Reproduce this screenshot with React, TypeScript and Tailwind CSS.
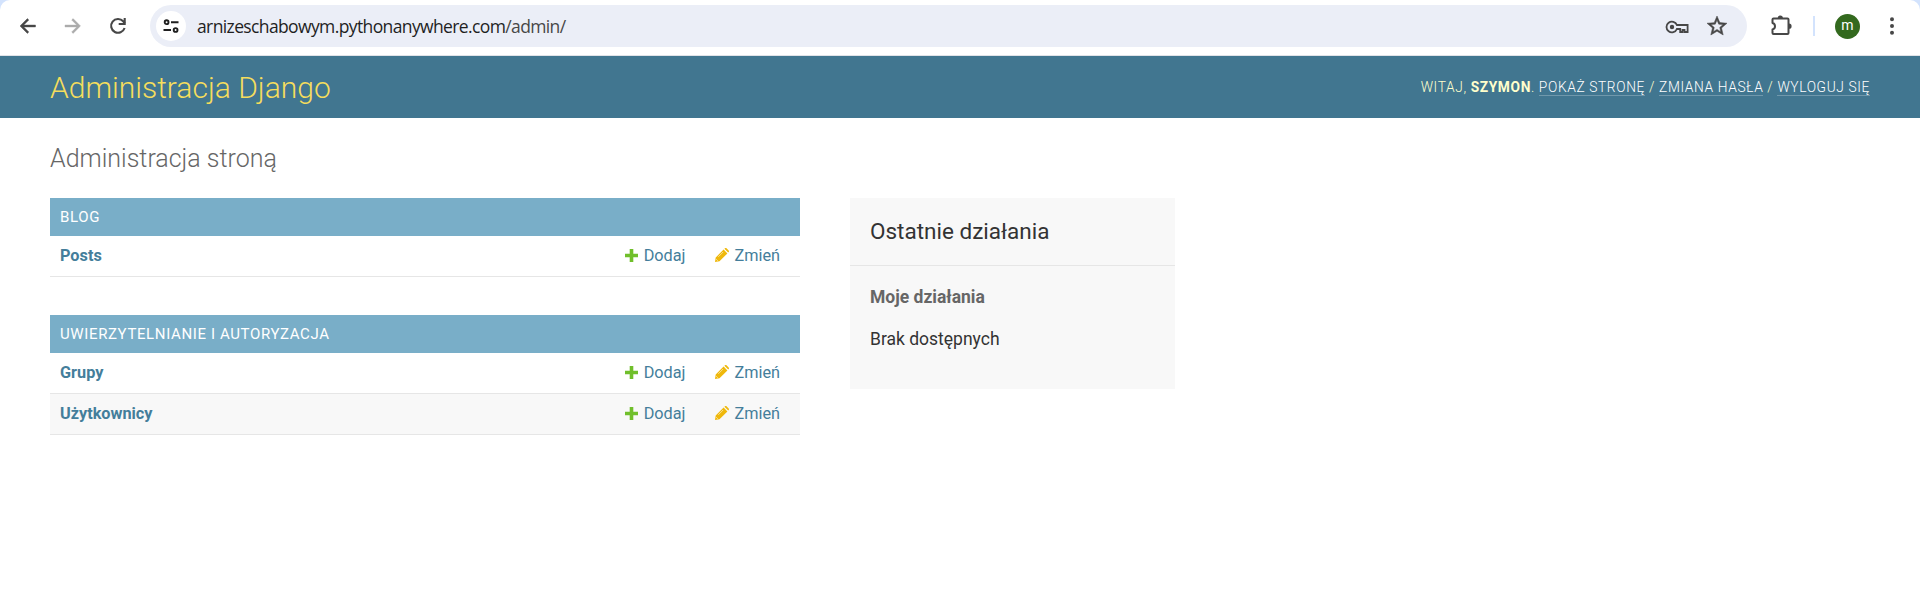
import type { ReactNode } from "react";

function Icon({ d, className }: { d: string; className: string }) {
  return (
    <svg viewBox="0 0 24 24" fill="currentColor" className={className}>
      <path d={d} />
    </svg>
  );
}

function BrowserBar() {
  return (
    <div className="bg-[#d3e3fd]">
      <div className="flex h-14 items-start rounded-t-[10px] border-b border-[#e1e3e8] bg-white">
        <div className="mt-[5px] flex h-[42px] items-center pl-4">
          <Icon className="size-6 stroke-current stroke-[0.4] text-[#474747]" d="M19.500 11H7.830l5-5L11.400 4.600 4 12l7.400 7.400 1.430-1.400-5-5H19.500z" />
          <Icon className="ml-[21px] size-6 stroke-current stroke-[0.4] text-[#ababab]" d="M12.100 4.600L10.670 6l5 5H4v2h11.670l-5 5 1.430 1.400L19.500 12z" />
          <svg viewBox="0 0 24 24" className="ml-[21px] size-6 text-[#474747]" fill="none" stroke="currentColor" strokeWidth="2.1">
            <path d="M18.600 14A6.900 6.900 0 1 1 17.200 7.300L18.800 9.200" />
            <path d="M18.700 4V10H12.700" />
          </svg>
        </div>
        <div className="mt-[5px] ml-[20px] flex h-[42px] w-[1597px] items-center rounded-full bg-[#ebeef7] pr-[18px] pl-1.5">
          <span className="flex size-[30px] items-center justify-center rounded-full bg-white text-[#1f1f1f]">
            <svg viewBox="0 0 16 16" className="size-4" fill="none" stroke="currentColor" strokeWidth="1.9">
              <circle cx="3.600" cy="4.200" r="1.900" />
              <path d="M8 4.200h7.500M.5 12h7.500" />
              <circle cx="12.600" cy="12" r="1.900" />
            </svg>
          </span>
          <span className="ml-[11px] font-['Open_Sans',sans-serif] text-[17.5px] tracking-[-0.62px] text-[#1f1f1f]">
            arnizeschabowym.pythonanywhere.com<span className="text-[#474747]">/admin/</span>
          </span>
          <svg viewBox="0 0 24 14" className="mt-px ml-auto h-[14px] w-6 text-[#474747]" fill="none" stroke="currentColor" strokeWidth="1.8">
            <path d="M11.900 5A5.400 5.400 0 1 0 11.900 9H15.200v3h2.300V10h2v2H22.600V5Z" />
            <circle cx="7" cy="7" r="1.300" fill="currentColor" />
          </svg>
          <Icon
            className="ml-4 size-6 stroke-current stroke-[0.5] text-[#474747]"
            d="M22 9.240l-7.190-.62L12 2 9.190 8.630 2 9.240l5.460 4.730L5.820 21 12 17.270 18.180 21l-1.630-7.030L22 9.240zM12 15.400l-3.760 2.270 1-4.280-3.320-2.880 4.380-.38L12 6.100l1.710 4.040 4.380.38-3.320 2.880 1 4.280L12 15.400z"
          />
        </div>
        <div className="mt-[5px] flex h-[42px] items-center">
          <svg viewBox="0 0 24 24" className="ml-[22px] size-6 text-[#474747]" fill="none" stroke="currentColor" strokeWidth="2">
            <path strokeLinejoin="round" d="M4.500 4.500H18.500Q19.500 4.500 19.500 5.500V19Q19.500 20 18.500 20H4.500Q3.500 20 3.500 19V15.500Q6 14.700 6 12.200T3.500 9V5.500Q3.500 4.500 4.500 4.500Z" />
            <path stroke="none" d="M8.700 4a2.600 2.600 0 0 1 5.200 0zM20 9.600a2.600 2.600 0 0 1 0 5.200z" fill="currentColor" />
          </svg>
          <span className="ml-5 h-5 w-0.5 bg-[#d3e3fd]" />
          <span className="ml-5 flex size-[25px] items-center justify-center rounded-full bg-[#33691e] pb-px font-['Roboto',sans-serif] text-[14px] text-white">m</span>
          <Icon
            className="ml-5 size-6 text-[#474747]"
            d="M12 7.200a2 2 0 1 0 0-4 2 2 0 0 0 0 4zm0 6.800a2 2 0 1 0 0-4 2 2 0 0 0 0 4zm0 6.800a2 2 0 1 0 0-4 2 2 0 0 0 0 4z"
          />
        </div>
      </div>
    </div>
  );
}

function UserLink({ children }: { children: ReactNode }) {
  return <a className="border-b border-white/25 text-white">{children}</a>;
}

function SiteHeader() {
  return (
    <header className="flex h-[62px] items-center justify-between bg-[#417690] px-[50px] pt-0.5 text-[#ffffcc]">
      <h1 className="text-[30px] leading-none font-light text-[#f5dd5d]">Administracja Django</h1>
      <div className="text-[13.75px] leading-none font-light tracking-[0.625px] uppercase">
        Witaj, <strong className="font-bold">Szymon</strong>. <UserLink>Pokaż stronę</UserLink> / <UserLink>Zmiana hasła</UserLink> /{" "}
        <UserLink>Wyloguj się</UserLink>
      </div>
    </header>
  );
}

function Row({ name }: { name: string }) {
  return (
    <div className="flex h-[41px] items-center border-b border-[#e6e6e6] pr-5 pl-2.5 text-[16.25px] text-[#447e9b] even:bg-[#f8f8f8]">
      <a className="mr-auto font-bold">{name}</a>
      <svg viewBox="0 0 13 13" className="mr-[6px] mb-0.5 size-[13px] fill-[#70bf2b]">
        <path d="M4.700 0h3.600v4.700H13v3.600H8.300V13H4.700V8.300H0V4.700h4.700z" />
      </svg>
      <a className="mr-[30px]">Dodaj</a>
      <svg viewBox="0 0 14 14" className="mr-[5px] mb-0.5 size-[14px]">
        <path fill="#efb80b" d="M0 14l.7-4.500L8.600 1.600l3.800 3.800-7.900 7.900zM9.400.8l.6-.5c.5-.4 1-.4 1.500 0l2.200 2.200c.4.500.4 1 0 1.500l-.5.600z" />
        <path stroke="#fff" strokeOpacity=".8" strokeWidth=".7" d="M3.300 8.800l4.800-4.800M1.200 11.200l1.600 1.600" />
      </svg>
      <a>Zmień</a>
    </div>
  );
}

function AppModule({ title, models }: { title: string; models: string[] }) {
  return (
    <section className="w-[750px]">
      <h2 className="flex h-[38px] items-center bg-[#79aec8] px-2.5 text-[15px] tracking-[0.625px] text-white uppercase">{title}</h2>
      <div>
        {models.map((m) => (
          <Row key={m} name={m} />
        ))}
      </div>
    </section>
  );
}

export default function App() {
  return (
    <div className="min-h-[590px] bg-white font-['Roboto',sans-serif]">
      <BrowserBar />
      <SiteHeader />
      <main className="px-[50px] pt-[26px]">
        <h1 className="mb-6 text-[25px] leading-[30px] font-light text-[#666]">Administracja stroną</h1>
        <div className="flex items-start gap-[50px]">
          <div className="flex flex-col gap-[38px]">
            <AppModule title="Blog" models={["Posts"]} />
            <AppModule title="Uwierzytelnianie i autoryzacja" models={["Grupy", "Użytkownicy"]} />
          </div>
          <aside className="h-[191px] w-[325px] bg-[#f8f8f8]">
            <h2 className="flex h-[68px] items-center border-b border-[#e6e6e6] px-5 text-[22.5px] text-[#333]">Ostatnie działania</h2>
            <h3 className="px-5 pt-5 text-[17.5px] leading-[22px] font-bold text-[#666]">Moje działania</h3>
            <p className="px-5 pt-5 text-[17.5px] leading-[22px] text-[#333]">Brak dostępnych</p>
          </aside>
        </div>
      </main>
    </div>
  );
}
